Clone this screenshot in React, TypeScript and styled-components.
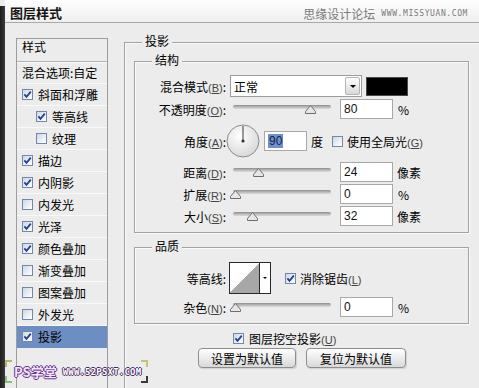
import React, { FC } from 'react';
import styled, { createGlobalStyle } from 'styled-components';

const GlobalStyle = createGlobalStyle`
    html, body {
        margin: 0;
        padding: 0;
        background: #ececec;
    }
    #root {
        width: 479px;
        height: 388px;
    }
`;

const CJK = `"Noto Sans CJK SC", "Liberation Sans", sans-serif`;
const LATIN = `"Liberation Sans", Arial, sans-serif`;
const BG = '#ececec';
const LINE = '#a2a2a2';

interface StyleItem {
    name: string;
    checked?: boolean;
    indent?: boolean;
    selected?: boolean;
}

const styleItems: StyleItem[] = [
    { name: '斜面和浮雕', checked: true },
    { name: '等高线', checked: true, indent: true },
    { name: '纹理', indent: true },
    { name: '描边', checked: true },
    { name: '内阴影', checked: true },
    { name: '内发光' },
    { name: '光泽', checked: true },
    { name: '颜色叠加', checked: true },
    { name: '渐变叠加' },
    { name: '图案叠加' },
    { name: '外发光' },
    { name: '投影', checked: true, selected: true },
];

const Window = styled.div`
    position: relative;
    width: 479px;
    height: 388px;
    overflow: hidden;
    display: flex;
    background: ${BG};
    font-family: ${CJK};
    font-size: 12px;
    color: #000;
`;

const Edge = styled.div`
    width: 5px;
    flex: none;
    margin-top: 6px;
    background: linear-gradient(90deg, #1c1c1c, #3b3b3b);
`;

const Dialog = styled.div`
    flex: 1;
    min-width: 0;
    display: flex;
    flex-direction: column;
`;

const TitleBar = styled.div`
    height: 23px;
    flex: none;
    box-sizing: border-box;
    padding: 4px 11px 0 5px;
    display: flex;
    align-items: center;
    justify-content: space-between;
    border-bottom: 1px solid #a9a9a9;
    background: linear-gradient(#fefefe, #efefef);
`;

const Title = styled.div`
    font-size: 13px;
    font-weight: bold;
    color: #151515;
    line-height: 16px;
`;

const SiteMark = styled.div`
    display: flex;
    align-items: center;
    gap: 6px;
    color: #7c7c7c;
    line-height: 14px;
    padding-top: 2px;
`;

const SiteUrl = styled.span`
    font-family: 'DejaVu Sans Mono', monospace;
    font-size: 8px;
    letter-spacing: 0.6px;
    color: #7a7a7a;
`;

const Body = styled.div`
    flex: 1;
    min-height: 0;
    display: flex;
    align-items: flex-start;
    padding-left: 11px;
`;

const StylePanel = styled.div`
    width: 92px;
    height: 420px;
    flex: none;
    margin-top: 15px;
    box-sizing: border-box;
    border: 1px solid #9d9d9d;
`;

const PanelHeader = styled.div`
    height: 23px;
    box-sizing: border-box;
    padding-left: 5px;
    line-height: 15px;
    border-bottom: 1px solid #b2b2b2;
    box-shadow: 0 1px 0 #fbfbfb;
`;

const StyleRow = styled.div<{ $indent?: boolean; $selected?: boolean }>`
    height: 22px;
    box-sizing: border-box;
    display: flex;
    align-items: center;
    gap: 5px;
    padding-left: ${({ $indent }) => ($indent ? 19 : 5)}px;
    white-space: nowrap;
    border-bottom: 1px solid ${({ $selected }) => ($selected ? '#6c8ec2' : '#f9f9f9')};
    background: ${({ $selected }) => ($selected ? '#6c8ec2' : 'transparent')};
`;

const Box = styled.span`
    width: 11px;
    height: 11px;
    flex: none;
    box-sizing: border-box;
    display: inline-flex;
    align-items: center;
    justify-content: center;
    border: 1px solid #7388a8;
    background: linear-gradient(135deg, #ccd6e4 0%, #eaeff5 55%, #ffffff 100%);
`;

const CheckBox: FC<{ checked?: boolean }> = ({ checked }) => (
    <Box>
        {checked && (
            <svg width="9" height="9" viewBox="0 0 9 9">
                <path d="M1.4 4.4 L3.5 6.9 L7.8 1.6" fill="none" stroke="#21438f" strokeWidth="1.8" />
            </svg>
        )}
    </Box>
);

const OuterFrame = styled.div`
    width: 380px;
    height: 420px;
    flex: none;
    margin: 19px 0 0 16px;
    box-sizing: border-box;
    padding-left: 9px;
    border: 1px solid ${LINE};
    box-shadow: inset 1px 1px 0 #fafafa;
`;

const Legend = styled.div<{ $offset: number }>`
    width: fit-content;
    height: 14px;
    line-height: 14px;
    margin: -9px 0 0 ${({ $offset }) => $offset}px;
    padding: 0 3px;
    background: ${BG};
`;

const Group = styled.div<{ $mt: number }>`
    width: 335px;
    box-sizing: border-box;
    margin-top: ${({ $mt }) => $mt}px;
    padding-bottom: 6px;
    border: 1px solid ${LINE};
    box-shadow: inset 1px 1px 0 #fafafa, 1px 1px 0 #fafafa;
`;

const FieldRow = styled.div<{ $h: number; $mt: number }>`
    height: ${({ $h }) => $h}px;
    margin-top: ${({ $mt }) => $mt}px;
    display: flex;
    align-items: center;
    white-space: nowrap;
`;

const FieldLabel = styled.div`
    width: 91px;
    flex: none;
    text-align: right;
`;

const Key = styled.span`
    font-family: ${LATIN};
    font-size: 11px;
    color: #444;
`;

const Label: FC<{ text: string; k?: string }> = ({ text, k }) => (
    <FieldLabel>
        {text}
        {k && (
            <Key>
                (<u>{k}</u>)
            </Key>
        )}
        :
    </FieldLabel>
);

const Select = styled.div`
    width: 132px;
    height: 22px;
    margin-left: 4px;
    box-sizing: border-box;
    display: flex;
    align-items: center;
    justify-content: space-between;
    padding-left: 3px;
    border: 1px solid #9c9c9c;
    background: #fff;
`;

const SelectButton = styled.div`
    width: 15px;
    height: 18px;
    margin-right: 1px;
    box-sizing: border-box;
    display: flex;
    align-items: center;
    justify-content: center;
    border: 1px solid #b4b4b4;
    border-radius: 2px;
    background: linear-gradient(#fdfdfd, #d9d9d9);
`;

const DownArrow = styled.span<{ $size: number }>`
    width: 0;
    height: 0;
    border-left: ${({ $size }) => $size}px solid transparent;
    border-right: ${({ $size }) => $size}px solid transparent;
    border-top: ${({ $size }) => $size}px solid #000;
`;

const Swatch = styled.div`
    width: 42px;
    height: 19px;
    margin-left: 4px;
    box-sizing: border-box;
    border: 1px solid #4a4a4a;
    background: #000;
`;

const Slider = styled.div`
    position: relative;
    width: 104px;
    height: 20px;
    margin-left: 4px;
    flex: none;
`;

const Track = styled.div`
    height: 4px;
    margin: 6px 3px 0;
    border-radius: 2px;
    background: linear-gradient(#8c8c8c, #bdbdbd 55%, #dcdcdc);
`;

const Knob = styled.svg<{ $x: number }>`
    position: absolute;
    top: 6px;
    left: ${({ $x }) => $x - 5.5}px;
    width: 11px;
    height: 10px;
`;

const SliderControl: FC<{ knob: number }> = ({ knob }) => (
    <Slider>
        <Track />
        <Knob $x={knob} viewBox="0 0 11 10">
            <polygon points="5.5,0.5 10.5,6.5 10.5,8.5 0.5,8.5 0.5,6.5" fill="#e6e6e6" stroke="#6e6e6e" strokeWidth="1" />
        </Knob>
    </Slider>
);

const NumBox = styled.div<{ $w: number; $ml: number }>`
    width: ${({ $w }) => $w}px;
    height: 20px;
    margin-left: ${({ $ml }) => $ml}px;
    box-sizing: border-box;
    padding-left: 3px;
    border: 1px solid #a8a8a8;
    background: #fff;
    font-family: ${LATIN};
    font-size: 12px;
    line-height: 18px;
    color: #111;
`;

const Picked = styled.span`
    padding: 0 1px;
    background: #7090cc;
    color: #14224a;
`;

const Unit = styled.span<{ $ml: number }>`
    margin-left: ${({ $ml }) => $ml}px;
`;

const Dial = styled.svg`
    width: 34px;
    height: 34px;
    flex: none;
`;

const Contour = styled.div`
    width: 42px;
    height: 32px;
    margin-left: 3px;
    box-sizing: border-box;
    display: flex;
    border: 1px solid #2a2a2a;
    background: #fff;
`;

const ContourCurve = styled.div`
    width: 29px;
    border-right: 1px solid #2a2a2a;
    background: linear-gradient(to bottom right, #ffffff 50%, #a7a7a7 50%);
`;

const ContourDrop = styled.div`
    flex: 1;
    display: flex;
    align-items: center;
    justify-content: center;
`;

const Option = styled.div<{ $ml: number }>`
    display: flex;
    align-items: center;
    gap: 4px;
    margin-left: ${({ $ml }) => $ml}px;
`;

const KnockoutRow = styled.div`
    height: 14px;
    margin: 7px 0 0 99px;
    display: flex;
    align-items: center;
    gap: 5px;
    white-space: nowrap;
`;

const ButtonRow = styled.div`
    margin: 3px 0 0 64px;
    display: flex;
    gap: 10px;
`;

const Button = styled.div<{ $w: number }>`
    width: ${({ $w }) => $w}px;
    height: 20px;
    box-sizing: border-box;
    display: flex;
    align-items: center;
    justify-content: center;
    border: 1px solid #8e8e8e;
    border-radius: 4px;
    background: linear-gradient(#ffffff, #ececec 50%, #d8d8d8);
    box-shadow: 1px 1px 1px rgba(0, 0, 0, 0.12);
`;

const Stamp = styled.div`
    position: absolute;
    left: 5px;
    top: 360px;
    width: 143px;
    height: 23px;
    display: flex;
    align-items: center;
    white-space: nowrap;
`;

const Corners = styled.div`
    height: 100%;
    flex: none;
    display: flex;
    flex-direction: column;
    justify-content: space-between;
`;

const StampName = styled.span`
    flex: none;
    font-size: 13px;
    font-weight: bold;
    line-height: 13px;
    color: #efe6f8;
    text-shadow: 1px 0 0 #6a2f8e, -1px 0 0 #6a2f8e, 0 1px 0 #6a2f8e, 0 -1px 0 #6a2f8e;
    margin-left: 2px;
`;

const StampUrl = styled.span`
    flex: none;
    font-family: 'DejaVu Sans Mono', monospace;
    font-size: 9px;
    font-weight: bold;
    letter-spacing: 0.2px;
    line-height: 10px;
    color: #ffffff;
    text-shadow: 1px 0 0 #4c2a66, -1px 0 0 #4c2a66, 0 1px 0 #4c2a66, 0 -1px 0 #4c2a66;
    margin: 0 auto 0 6px;
`;

const Corner: FC<{ d: string; color: string }> = ({ d, color }) => (
    <svg width="7" height="7" viewBox="0 0 7 7">
        <path d={d} fill="none" stroke={color} strokeWidth="2" />
    </svg>
);

const App: FC = () => (
    <Window>
        <GlobalStyle />
        <Edge />
        <Dialog>
            <TitleBar>
                <Title>图层样式</Title>
                <SiteMark>
                    思缘设计论坛
                    <SiteUrl>WWW.MISSYUAN.COM</SiteUrl>
                </SiteMark>
            </TitleBar>
            <Body>
                <StylePanel>
                    <PanelHeader>样式</PanelHeader>
                    <StyleRow>混合选项:自定</StyleRow>
                    {styleItems.map((item) => (
                        <StyleRow key={item.name} $indent={item.indent} $selected={item.selected}>
                            <CheckBox checked={item.checked} />
                            {item.name}
                        </StyleRow>
                    ))}
                </StylePanel>

                <OuterFrame>
                    <Legend $offset={8}>投影</Legend>

                    <Group $mt={13}>
                        <Legend $offset={17}>结构</Legend>
                        <FieldRow $h={22} $mt={8}>
                            <Label text="混合模式" k="B" />
                            <Select>
                                正常
                                <SelectButton>
                                    <DownArrow $size={3} />
                                </SelectButton>
                            </Select>
                            <Swatch />
                        </FieldRow>
                        <FieldRow $h={20} $mt={2}>
                            <Label text="不透明度" k="O" />
                            <SliderControl knob={80} />
                            <NumBox $w={53} $ml={6}>80</NumBox>
                            <Unit $ml={5}>%</Unit>
                        </FieldRow>
                        <FieldRow $h={34} $mt={5}>
                            <Label text="角度" k="A" />
                            <Dial viewBox="0 0 34 34">
                                <defs>
                                    <radialGradient id="dialFill" cx="40%" cy="35%" r="70%">
                                        <stop offset="0%" stopColor="#ffffff" />
                                        <stop offset="100%" stopColor="#d6d6d6" />
                                    </radialGradient>
                                </defs>
                                <circle cx="17" cy="17" r="16" fill="url(#dialFill)" stroke="#8c8c8c" />
                                <line x1="17" y1="17" x2="17" y2="2" stroke="#3a3a3a" strokeWidth="1" />
                                <circle cx="17" cy="17" r="1.6" fill="#333" />
                            </Dial>
                            <NumBox $w={43} $ml={4}>
                                <Picked>90</Picked>
                            </NumBox>
                            <Unit $ml={4}>度</Unit>
                            <Option $ml={9}>
                                <CheckBox />
                                <span>
                                    使用全局光
                                    <Key>
                                        (<u>G</u>)
                                    </Key>
                                </span>
                            </Option>
                        </FieldRow>
                        <FieldRow $h={20} $mt={4}>
                            <Label text="距离" k="D" />
                            <SliderControl knob={28} />
                            <NumBox $w={53} $ml={6}>24</NumBox>
                            <Unit $ml={4}>像素</Unit>
                        </FieldRow>
                        <FieldRow $h={20} $mt={2}>
                            <Label text="扩展" k="R" />
                            <SliderControl knob={5} />
                            <NumBox $w={53} $ml={6}>0</NumBox>
                            <Unit $ml={5}>%</Unit>
                        </FieldRow>
                        <FieldRow $h={20} $mt={2}>
                            <Label text="大小" k="S" />
                            <SliderControl knob={22} />
                            <NumBox $w={53} $ml={6}>32</NumBox>
                            <Unit $ml={4}>像素</Unit>
                        </FieldRow>
                    </Group>

                    <Group $mt={14}>
                        <Legend $offset={17}>品质</Legend>
                        <FieldRow $h={32} $mt={9}>
                            <Label text="等高线" />
                            <Contour>
                                <ContourCurve />
                                <ContourDrop>
                                    <DownArrow $size={2.5} />
                                </ContourDrop>
                            </Contour>
                            <Option $ml={14}>
                                <CheckBox checked />
                                <span>
                                    消除锯齿
                                    <Key>
                                        (<u>L</u>)
                                    </Key>
                                </span>
                            </Option>
                        </FieldRow>
                        <FieldRow $h={20} $mt={3}>
                            <Label text="杂色" k="N" />
                            <SliderControl knob={5} />
                            <NumBox $w={53} $ml={6}>0</NumBox>
                            <Unit $ml={5}>%</Unit>
                        </FieldRow>
                    </Group>

                    <KnockoutRow>
                        <CheckBox checked />
                        <span>
                            图层挖空投影
                            <Key>
                                (<u>U</u>)
                            </Key>
                        </span>
                    </KnockoutRow>
                    <ButtonRow>
                        <Button $w={98}>设置为默认值</Button>
                        <Button $w={100}>复位为默认值</Button>
                    </ButtonRow>
                </OuterFrame>
            </Body>
        </Dialog>

        <Stamp>
            <Corners>
                <Corner d="M1 7 V1 H7" color="#b9b46a" />
                <Corner d="M1 0 V6 H7" color="#8cc07a" />
            </Corners>
            <StampName>PS学堂</StampName>
            <StampUrl>WWW.52PSXT.COM</StampUrl>
            <Corners>
                <Corner d="M0 1 H6 V7" color="#c9c26e" />
                <Corner d="M0 6 H6 V0" color="#3a3a3a" />
            </Corners>
        </Stamp>
    </Window>
);

export default App;
